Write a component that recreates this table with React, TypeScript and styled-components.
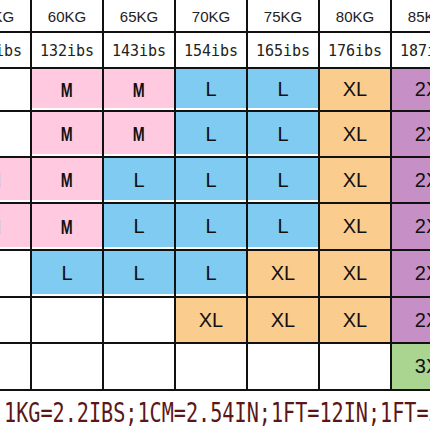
import React from 'react';
import styled, { createGlobalStyle } from 'styled-components';

const GlobalStyle = createGlobalStyle`
  html, body {
    margin: 0;
    padding: 0;
    background: #ffffff;
    overflow: hidden;
  }
  body {
    width: 430px;
    height: 430px;
    font-family: 'Liberation Sans', Arial, sans-serif;
  }
`;

const fills: Record<string, string> = {
  w: '#ffffff',
  p: '#ffc9df',
  b: '#80cbf2',
  o: '#facd8e',
  v: '#c690c6',
  g: '#a9d590',
};

const Page = styled.div`
  width: 430px;
  height: 430px;
  overflow: hidden;
  display: flex;
  flex-direction: column;
`;

const Chart = styled.div`
  margin-left: -40px;
  display: grid;
  grid-template-columns: repeat(7, 70px);
  grid-template-rows: 31px 34px 41px 44px 44px 45px 45px 44px 45px;
  gap: 2px;
  background: #111111;
  border-bottom: 2px solid #111111;
  width: max-content;
`;

const Cell = styled.div<{ $fill: string; $gap?: boolean }>`
  background: ${p => fills[p.$fill]};
  box-shadow: ${p => (p.$gap ? 'inset 0 -2px 0 #ffffff' : 'none')};
  display: flex;
  align-items: center;
  justify-content: center;
  overflow: hidden;
  white-space: nowrap;
`;

const Weight = styled.span`
  font-family: 'Liberation Sans', Arial, sans-serif;
  font-size: 15px;
  color: #222222;
  padding-top: 2px;
`;

const Pounds = styled.span`
  font-family: 'DejaVu Sans Mono', monospace;
  font-size: 15px;
  color: #222222;
  padding-top: 2px;
`;

const Size = styled.span<{ $bold?: boolean }>`
  display: inline-block;
  font-family: 'Liberation Sans', Arial, sans-serif;
  font-size: ${p => (p.$bold ? '21px' : '20px')};
  font-weight: ${p => (p.$bold ? 700 : 400)};
  transform: ${p => (p.$bold ? 'scaleX(0.68)' : 'none')};
  color: #111111;
`;

const Footer = styled.div`
  flex: 1;
  display: flex;
  align-items: center;
  padding-left: 4px;
  padding-top: 4px;
  overflow: hidden;
  white-space: nowrap;
`;

const Note = styled.span`
  display: inline-block;
  font-family: 'DejaVu Sans Mono', monospace;
  font-size: 26px;
  color: #5c1616;
  transform: scaleX(0.775);
  transform-origin: left center;
`;

const kg = ['55KG', '60KG', '65KG', '70KG', '75KG', '80KG', '85KG'];
const lbs = ['121ibs', '132ibs', '143ibs', '154ibs', '165ibs', '176ibs', '187ibs'];

const letter: Record<string, string> = { p: 'M', b: 'L', o: 'XL', v: '2X', g: '3X' };

const sizeRows = [
  'wppbbov',
  'wppbbov',
  'ppbbbov',
  'ppbbbov',
  'wbbboov',
  'wwwooov',
  'wwwwwwg',
];

export default function App() {
  return (
    <Page>
      <GlobalStyle />
      <Chart>
        {kg.map(k => (
          <Cell key={k} $fill="w">
            <Weight>{k}</Weight>
          </Cell>
        ))}
        {lbs.map(l => (
          <Cell key={l} $fill="w">
            <Pounds>{l}</Pounds>
          </Cell>
        ))}
        {sizeRows.map((row, r) =>
          row.split('').map((f, c) => (
            <Cell key={`${r}-${c}`} $fill={f} $gap={f === 'p' || f === 'b'}>
              {f !== 'w' && <Size $bold={f === 'p'}>{letter[f]}</Size>}
            </Cell>
          ))
        )}
      </Chart>
      <Footer>
        <Note>1KG=2.2IBS;1CM=2.54IN;1FT=12IN;1FT=30.48CM</Note>
      </Footer>
    </Page>
  );
}
